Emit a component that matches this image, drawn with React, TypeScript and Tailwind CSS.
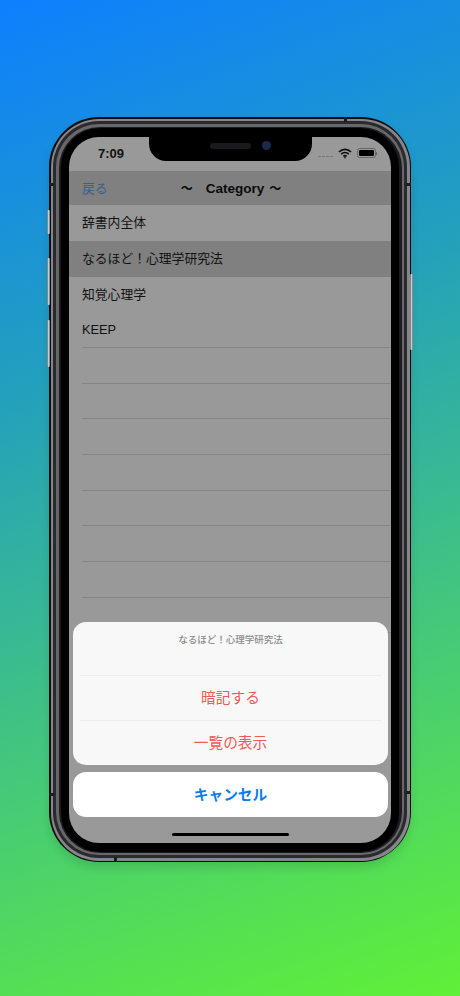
import React from 'react';

const jp = 'font-["Liberation_Sans","Noto_Sans_CJK_JP",sans-serif]';

const rows = ['辞書内全体', 'なるほど！心理学研究法', '知覚心理学', 'KEEP', '', '', '', '', '', '', '', ''];

const SideButton: React.FC<{ className: string }> = ({ className }) => (
  <div className={`absolute w-[3px] bg-gradient-to-r from-[#5a6a72] via-[#c8ccce] to-[#6b6f72] rounded-[1px] ${className}`} />
);

// dark antenna breaks in the metal band
const Band: React.FC<{ className: string }> = ({ className }) => (
  <div className={`absolute bg-[#1c1c1e] ${className}`} />
);

const App: React.FC = () => {
  return (
    <div className={`w-[460px] h-[996px] overflow-hidden bg-[linear-gradient(160deg,#0e7ffe_0%,#23a0bc_34%,#44c67e_66%,#60f038_100%)] pt-[117px] pl-[49px] ${jp}`}>
      {/* Phone body */}
      <div className="relative w-[362px] h-[745px]">
        <SideButton className="left-[-2px] top-[93px] h-[24px]" />
        <SideButton className="left-[-2px] top-[141px] h-[47px]" />
        <SideButton className="left-[-2px] top-[203px] h-[47px]" />
        <SideButton className="right-[-2px] top-[157px] h-[76px]" />

        <div className="w-full h-full rounded-[50px] bg-[#0c0c0d] p-[1.5px] shadow-[0_6px_10px_rgba(0,0,0,0.12)]">
          <div className="w-full h-full rounded-[48px] bg-[#85858a] p-[2.5px]">
            <div className="w-full h-full rounded-[46px] bg-[#2a2a2c] p-[3px]">
              <div className="w-full h-full rounded-[43px] bg-[#68686a] p-[2.5px]">
                <div className="w-full h-full rounded-[41px] bg-[#1c1c1e] pt-[1px] px-[2.5px] pb-[1px]">
                  <div className="w-full h-full rounded-[39px] bg-black pt-[9px] px-[8px] pb-[9px]">
                    {/* Screen */}
                    <div className="relative w-full h-full rounded-[30px] overflow-hidden bg-[#999999] flex flex-col">
                      {/* Notch */}
                      <div className="absolute left-[80px] top-0 w-[163px] h-[24px] bg-black rounded-b-[17px]">
                        <div className="absolute left-[61px] top-[6px] w-[41px] h-[6px] rounded-full bg-[#1a1a1c]" />
                        <div className="absolute left-[113px] top-[4px] w-[9px] h-[9px] rounded-full bg-[#1c2a4a]" />
                      </div>

                      {/* Status bar */}
                      <div className="h-[34px] shrink-0 flex items-start justify-between pl-[29px] pr-[14px] pt-[9px]">
                        <span className="text-[13px] leading-[15px] font-bold text-[#111]">7:09</span>
                        <div className="flex items-center gap-[5px] mt-[2px]">
                          <div className="flex items-center gap-[1px] mt-[7px]">
                            <span className="w-[3px] h-[1px] bg-[#777]" />
                            <span className="w-[3px] h-[1px] bg-[#777]" />
                            <span className="w-[3px] h-[1px] bg-[#777]" />
                            <span className="w-[3px] h-[1px] bg-[#777]" />
                          </div>
                          <svg width="14" height="11" viewBox="0 0 14 11" fill="none" stroke="#0a0a0a" strokeWidth="1.7">
                            <path d="M1 4 C4.5 0.6 9.5 0.6 13 4" />
                            <path d="M3.2 6.2 C5.4 4.2 8.6 4.2 10.8 6.2" />
                            <path d="M5.4 8.3 C6.3 7.5 7.7 7.5 8.6 8.3" />
                            <circle cx="7" cy="9.8" r="0.8" fill="#0a0a0a" stroke="none" />
                          </svg>
                          <div className="flex items-center">
                            <div className="w-[19px] h-[10px] rounded-[2.5px] border border-[#666] p-[1px]">
                              <div className="w-full h-full rounded-[1px] bg-black" />
                            </div>
                            <div className="w-[1px] h-[3px] bg-[#666] ml-[0.5px]" />
                          </div>
                        </div>
                      </div>

                      {/* Nav bar */}
                      <div className="relative h-[34px] shrink-0 bg-[#808080] flex items-center justify-center">
                        <span className="absolute left-[13px] top-[8px] text-[12.8px] text-[#3c5f80]">戻る</span>
                        <div className="flex items-center gap-[13px] pt-[3px] pl-[2px] text-[13.5px] font-bold text-[#0b0b0b]">
                          <span className="text-[12px]">〜</span>
                          <div className="flex items-center gap-[5px]">
                            <span>Category</span>
                            <span className="text-[12px]">〜</span>
                          </div>
                        </div>
                      </div>

                      {/* List */}
                      <div className="flex flex-col pt-[0.7px]">
                        {rows.map((title, i) => (
                          <div key={i} className={`h-[35.7px] shrink-0 flex items-center pl-[13px] ${i === 1 ? 'bg-[#808080]' : ''}`}>
                            <div className={`w-full h-full flex items-center text-[12.8px] text-[#111] ${i >= 3 ? 'border-b border-[#858585]' : ''}`}>
                              {title}
                            </div>
                          </div>
                        ))}
                      </div>

                      {/* Action sheet */}
                      <div className="absolute left-[4px] right-[3px] top-[485px] flex flex-col gap-[7px]">
                        <div className="rounded-[13px] bg-[#f8f8f8] flex flex-col">
                          <div className="h-[53px] pt-[10px] flex justify-center text-[9.5px] leading-[16px] font-medium text-[#8a8a8a]">
                            なるほど！心理学研究法
                          </div>
                          <div className="mx-[7px] border-t border-[#ececec]" />
                          <div className="h-[44px] pt-[2px] flex items-center justify-center text-[14.7px] text-[#ef5a55]">暗記する</div>
                          <div className="mx-[7px] border-t border-[#ececec]" />
                          <div className="h-[44px] pt-[2px] flex items-center justify-center text-[14.7px] text-[#ef5a55]">一覧の表示</div>
                        </div>
                        <div className="h-[45px] pt-[2px] rounded-[13px] bg-white flex items-center justify-center text-[14.7px] font-bold text-[#0a7cf0]">
                          キャンセル
                        </div>
                      </div>

                      {/* Home indicator */}
                      <div className="absolute left-[103px] bottom-[7px] w-[117px] h-[3px] rounded-full bg-black" />
                    </div>
                  </div>
                </div>
              </div>
            </div>
          </div>
        </div>

        <Band className="left-[295px] top-0 w-[3px] h-[5px]" />
        <Band className="left-[65px] bottom-0 w-[3px] h-[5px]" />
        <Band className="left-0 top-[66px] w-[5px] h-[3px]" />
        <Band className="right-0 top-[66px] w-[5px] h-[3px]" />
        <Band className="left-0 bottom-[66px] w-[5px] h-[3px]" />
        <Band className="right-0 bottom-[68px] w-[5px] h-[3px]" />
      </div>
    </div>
  );
};

export default App;
